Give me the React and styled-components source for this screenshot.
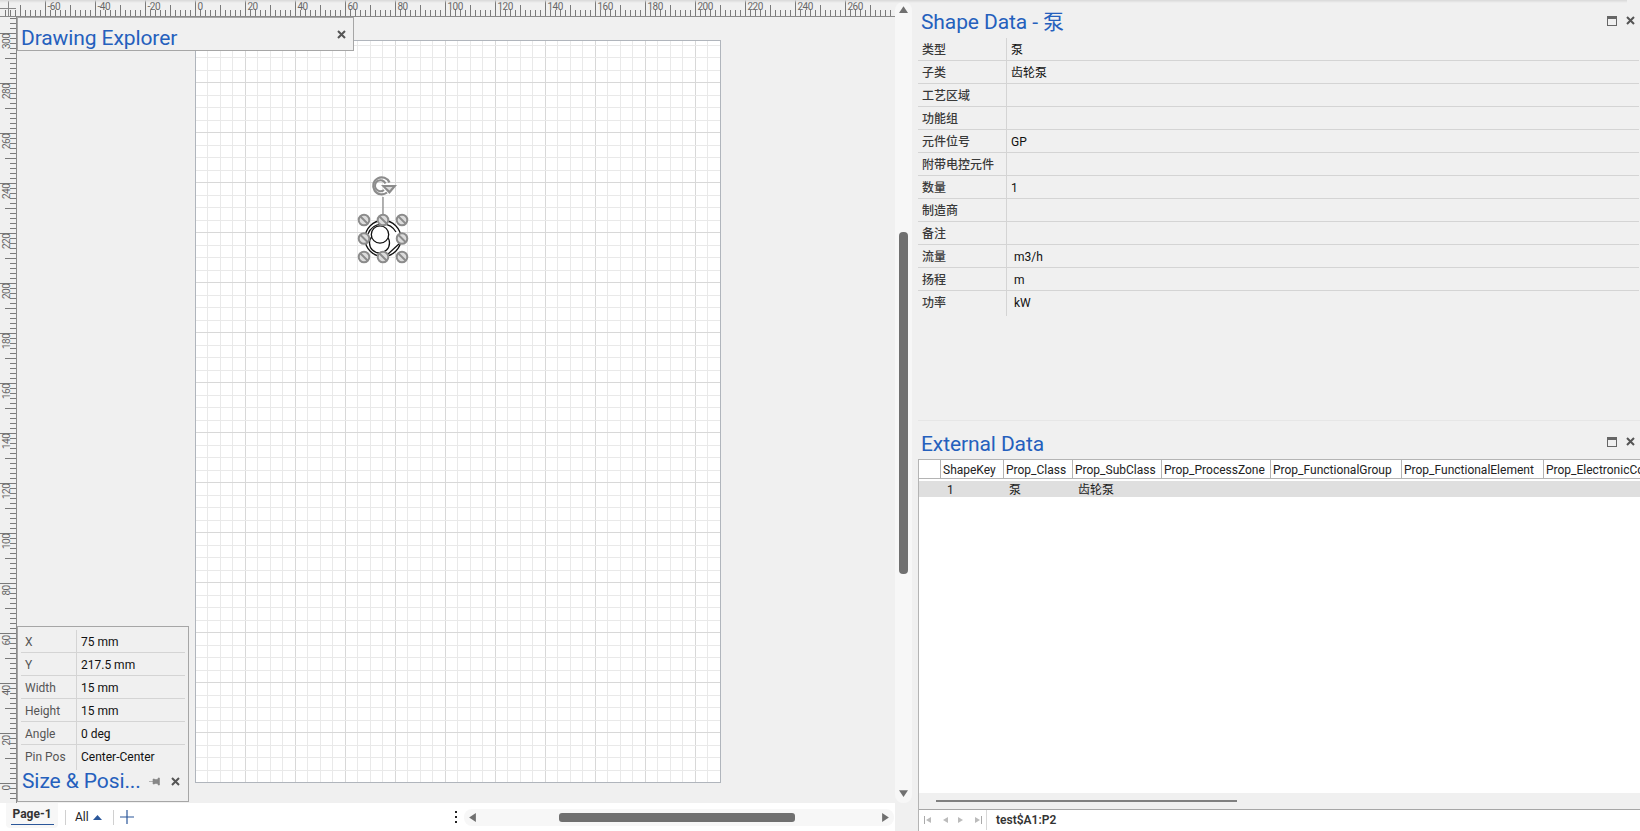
import React from 'react';
import styled, { createGlobalStyle } from 'styled-components';

const UI_FONT = 'Roboto, "Noto Sans CJK SC", sans-serif';

const GlobalStyle = createGlobalStyle`
  html, body {
    margin: 0;
    padding: 0;
    background: #f0f0f0;
    overflow: hidden;
  }
  body {
    font-family: ${UI_FONT};
    font-size: 12px;
    color: #222;
  }
  * { box-sizing: border-box; }
`;

const Screen = styled.div`
  position: relative;
  display: flex;
  width: 1640px;
  height: 831px;
  overflow: hidden;
`;

const TopShadow = styled.div`
  position: absolute;
  left: 0;
  top: 0;
  width: 1627px;
  height: 3px;
  background: linear-gradient(#d8d8d8, rgba(240, 240, 240, 0));
`;

const DrawingColumn = styled.div`
  display: flex;
  flex-direction: column;
  width: 895px;
  flex: none;
`;

const TopRuler = styled.div`
  height: 17px;
  flex: none;
  background: #f0f0f0;
  svg { display: block; }
`;

const CanvasRow = styled.div`
  display: flex;
  height: 786px;
  flex: none;
`;

const SideRuler = styled.div`
  width: 17px;
  flex: none;
  svg { display: block; }
`;

const Canvas = styled.div`
  position: relative;
  flex: 1;
  padding: 23px 0 0 178px;
  background: #f0f0f0;
`;

const Page = styled.div`
  position: relative;
  width: 526px;
  height: 743px;
  background: #fff;
  border: 1px solid #b0b5bc;
  svg { display: block; }
`;

const SelectionLayer = styled.svg`
  position: absolute;
  left: 144px;
  top: 129px;
`;

const FloatPanel = styled.div`
  position: absolute;
  left: 0;
  top: ${(p) => p.$top}px;
  width: ${(p) => p.$width}px;
  height: ${(p) => p.$height}px;
  background: #f0f0f0;
  border: 1px solid #a6a6a6;
`;

const ExplorerHead = styled.div`
  display: flex;
  align-items: center;
  justify-content: space-between;
  height: 100%;
  padding: 0 7px 0 3px;
`;

const PanelTitle = styled.div`
  margin-top: ${(p) => p.$drop || 0}px;
  font-size: 21px;
  font-weight: 400;
  line-height: 26px;
  letter-spacing: -0.1px;
  color: #2560bd;
  white-space: nowrap;
`;

const SizeBody = styled.div`
  display: flex;
  flex-direction: column;
  height: 100%;
  padding: 3px 3px 0;
`;

const SizeRow = styled.div`
  display: grid;
  grid-template-columns: 56px 1fr;
  height: 23px;
  flex: none;
  border-bottom: 1px solid ${(p) => (p.$last ? 'transparent' : '#d4d4d4')};
`;

const SizeLabel = styled.div`
  padding-left: 4px;
  line-height: 25px;
  color: #555;
  border-right: 1px solid #d4d4d4;
`;

const SizeValue = styled.div`
  padding-left: 4px;
  line-height: 25px;
  color: #111;
`;

const SizeFoot = styled.div`
  display: flex;
  align-items: center;
  height: 26px;
  padding: 0 5px 0 1px;
`;

const FootIcons = styled.div`
  display: flex;
  align-items: center;
  gap: 11px;
  margin-left: auto;
`;

const BottomBar = styled.div`
  display: flex;
  align-items: center;
  height: 28px;
  flex: none;
  background: #fff;
  padding: 0 1px 0 6px;
`;

const PageTab = styled.div`
  position: relative;
  width: 52px;
  height: 25px;
  margin-top: -3px;
  background: #f7f7f7;
  border-radius: 0 0 4px 4px;
  text-align: center;
  font-weight: 700;
  line-height: 22px;
  color: #333;
  &::after {
    content: '';
    position: absolute;
    left: 5px;
    right: 4px;
    bottom: 3px;
    height: 1px;
    background: #2b579a;
  }
`;

const BarDivider = styled.div`
  width: 1px;
  height: 15px;
  background: #d0d0d0;
  margin: 0 ${(p) => p.$right || 0}px 0 ${(p) => p.$left || 0}px;
`;

const AllFilter = styled.div`
  display: flex;
  align-items: center;
  gap: 4px;
  color: #222;
`;

const BarDots = styled.div`
  display: flex;
  flex-direction: column;
  gap: 3px;
  margin: 0 7px 0 auto;
  i {
    display: block;
    width: 2px;
    height: 2px;
    background: #222;
  }
`;

const HTrack = styled.div`
  display: flex;
  align-items: center;
  width: 430px;
  height: 17px;
  padding: 0 4px;
  background: #f7f7f7;
  border-radius: 8px;
`;

const HThumb = styled.div`
  width: 235.5px;
  height: 9px;
  margin: 0 auto 0 82px;
  background: #707070;
  border-radius: 3px;
`;

const ScrollColumn = styled.div`
  width: 17px;
  flex: none;
`;

const VTrack = styled.div`
  display: flex;
  flex-direction: column;
  align-items: center;
  height: 801px;
  margin-top: 2px;
  padding: 3px 0 5px;
  background: #f7f7f7;
  border-radius: 8px;
`;

const VThumb = styled.div`
  width: 9px;
  height: 342px;
  margin: 218px 0 auto;
  background: #707070;
  border-radius: 4px;
`;

const RightColumn = styled.div`
  display: flex;
  flex-direction: column;
  flex: 1;
  min-width: 0;
  padding-left: 6px;
`;

const DockPanel = styled.div`
  display: flex;
  flex-direction: column;
  flex: none;
  height: ${(p) => p.$height}px;
  border-bottom: ${(p) => (p.$line ? '1px solid #e6e6e6' : 'none')};
`;

const DockHead = styled.div`
  display: flex;
  align-items: center;
  height: 38px;
  flex: none;
  padding: 3px 5px 0 3px;
`;

const DockIcons = styled.div`
  display: flex;
  align-items: center;
  gap: 9px;
  margin-left: auto;
`;

const DataRow = styled.div`
  display: grid;
  grid-template-columns: 89px 1fr;
  height: 23px;
  margin-right: 1px;
  border-bottom: 1px solid ${(p) => (p.$last ? 'transparent' : '#d4d4d4')};
`;

const DataLabel = styled.div`
  padding-left: 4px;
  line-height: 25px;
  font-weight: 500;
  color: #3a3a3a;
  border-right: 1px solid #d4d4d4;
`;

const DataValue = styled.div`
  padding-left: ${(p) => (p.$indent ? 7 : 4)}px;
  line-height: 25px;
  color: #111;
`;

const GridBox = styled.div`
  display: flex;
  flex-direction: column;
  flex: 1;
  min-height: 0;
  background: #fff;
  border-top: 1px solid #b4b4b4;
  border-left: 1px solid #b4b4b4;
`;

const GridHeader = styled.div`
  display: grid;
  grid-template-columns: 22px 63px 69px 89px 109px 131px 142px 1fr;
  height: 19px;
  flex: none;
  border-bottom: 1px solid #b4b4b4;
  overflow: hidden;
`;

const HeaderCell = styled.div`
  padding-left: 2px;
  line-height: 21px;
  white-space: nowrap;
  overflow: hidden;
  color: #222;
  border-right: 1px solid #b4b4b4;
  &:last-child { border-right: 0; }
`;

const GridRow = styled.div`
  display: grid;
  grid-template-columns: 22px 63px 69px 89px 109px 131px 142px 1fr;
  height: 16px;
  flex: none;
  margin-top: 2px;
  background: #dfdfdf;
`;

const RowCell = styled.div`
  padding-left: ${(p) => p.$pad}px;
  line-height: 18px;
  color: #222;
`;

const GridFill = styled.div`
  flex: 1;
`;

const GridScroll = styled.div`
  display: flex;
  align-items: center;
  height: 17px;
  flex: none;
  padding-left: 17px;
  background: #f0f0f0;
  border-bottom: 1px solid #a6a6a6;
`;

const GridScrollThumb = styled.div`
  width: 301px;
  height: 2px;
  background: #808080;
`;

const SheetBar = styled.div`
  display: flex;
  align-items: center;
  height: 20px;
  flex: none;
  margin-bottom: 1px;
  background: #fff;
`;

const SheetNav = styled.div`
  display: flex;
  align-items: center;
  justify-content: space-between;
  width: 68px;
  height: 100%;
  padding: 0 4px 0 5px;
  border-right: 1px solid #d8d8d8;
`;

const SheetName = styled.div`
  padding-left: 9px;
  font-weight: 600;
  color: #333;
`;

const range = (from, to, step) => {
  const out = [];
  for (let i = from; i <= to; i += step) out.push(i);
  return out;
};

const tickLength = (mm) => {
  if (mm % 20 === 0) return 16;
  if (mm % 10 === 0) return 11;
  return 6;
};

const hRulerX = (mm) => Math.floor(195 + mm * 2.5) + 0.5;
const vRulerY = (mm) => Math.floor(783 - 17 - mm * 2.5) + 0.5;

const RulerText = styled.text`
  font-family: ${UI_FONT};
  font-size: 10px;
  letter-spacing: -0.5px;
  fill: #666;
`;

const HorizontalRuler = () => (
  <TopRuler>
    <svg width="895" height="17">
      <path d="M0 8.5H16M8.5 1V16" stroke="#888" fill="none" />
      <path d="M0 16.5H895" stroke="#8a8a8a" />
      {range(-76, 280, 2).map((mm) => (
        <line
          key={mm}
          x1={hRulerX(mm)}
          x2={hRulerX(mm)}
          y1={16 - tickLength(mm)}
          y2={16}
          stroke="#7a7a7a"
        />
      ))}
      {range(-60, 260, 20).map((mm) => (
        <RulerText key={mm} x={hRulerX(mm) + 2} y={10}>{mm}</RulerText>
      ))}
    </svg>
  </TopRuler>
);

const VerticalRuler = () => (
  <SideRuler>
    <svg width="17" height="786">
      <path d="M16.5 0V786" stroke="#8a8a8a" />
      {range(-6, 306, 2).map((mm) => (
        <line
          key={mm}
          y1={vRulerY(mm)}
          y2={vRulerY(mm)}
          x1={16 - tickLength(mm)}
          x2={16}
          stroke="#7a7a7a"
        />
      ))}
      {range(0, 300, 20).map((mm) => (
        <RulerText
          key={mm}
          transform={`translate(9.5 ${vRulerY(mm) + (mm === 0 ? 7 : mm < 100 ? 12 : 15.5)}) rotate(-90)`}
        >
          {mm}
        </RulerText>
      ))}
    </svg>
  </SideRuler>
);

const PageGrid = () => (
  <svg width="524" height="741" shapeRendering="crispEdges">
    {range(1, 42, 1).map((i) => {
      const x = Math.floor(12.5 * i) - 0.5;
      return <line key={i} x1={x} x2={x} y1={0} y2={741} stroke={i % 4 === 0 ? '#d8d8d8' : '#e9e9e9'} />;
    })}
    {range(1, 59, 1).map((i) => {
      const y = 741.5 - Math.floor(12.5 * i);
      return <line key={i} y1={y} y2={y} x1={0} x2={524} stroke={i % 4 === 0 ? '#d8d8d8' : '#e9e9e9'} />;
    })}
  </svg>
);

const Handle = ({ x, y }) => (
  <g>
    <circle cx={x} cy={y} r="5.3" fill="#dcdcdc" stroke="#8c8c8c" strokeWidth="2" />
    <line x1={x - 3.5} y1={y - 3.5} x2={x + 3.5} y2={y + 3.5} stroke="#8c8c8c" strokeWidth="2" />
  </g>
);

const HANDLES = [
  [24, 50], [43, 50], [62, 50],
  [24, 68.5], [62, 68.5],
  [24, 87], [43, 87], [62, 87],
];

const SelectedPump = () => (
  <SelectionLayer width="70" height="95" viewBox="0 0 70 95">
    <line x1="43" y1="27" x2="43" y2="45" stroke="#8c8c8c" strokeWidth="1.3" />
    <circle cx="43" cy="68.5" r="18" fill="#fff" stroke="#111" strokeWidth="1.3" />
    <path d="M28 64A15.5 15.5 0 0 1 56 62" fill="none" stroke="#111" strokeWidth="1.2" />
    <path d="M47 85L60 73" fill="none" stroke="#111" strokeWidth="1.2" />
    <path d="M29 68A15 15 0 0 0 47 83" fill="none" stroke="#111" strokeWidth="1.2" />
    <circle cx="39.5" cy="73" r="10" fill="#fff" stroke="#111" strokeWidth="1.3" />
    <circle cx="40" cy="64.5" r="8.7" fill="#fff" stroke="#111" strokeWidth="1.3" />
    <path d="M49.5 12.5A8.5 8.5 0 1 0 47 22.5" fill="none" stroke="#8c8c8c" strokeWidth="2.2" />
    <path d="M45.5 13.5A5.5 5.5 0 1 0 44 20" fill="none" stroke="#8c8c8c" strokeWidth="2" />
    <polygon points="41,15 57,15 49.5,24" fill="#8c8c8c" />
    <polygon points="45.5,17 52.5,17 49.5,20.5" fill="#dcdcdc" />
    {HANDLES.map(([x, y]) => <Handle key={`${x}-${y}`} x={x} y={y} />)}
  </SelectionLayer>
);

const CloseIcon = ({ color = '#555' }) => (
  <svg width="9" height="9" viewBox="0 0 9 9">
    <path d="M1 1L8 8M8 1L1 8" stroke={color} strokeWidth="2" />
  </svg>
);

const PinIcon = () => (
  <svg width="11" height="9" viewBox="0 0 11 9">
    <path d="M0 4.5H4M4 2H5.5V7H4zM5.5 2.5H9V6.5H5.5zM9 1H10.5V8H9z" fill="#888" stroke="#888" strokeWidth="0.6" />
  </svg>
);

const DockWindowIcon = () => (
  <svg width="10" height="10" viewBox="0 0 10 10">
    <rect x="0.5" y="0.5" width="9" height="9" fill="none" stroke="#666" />
    <rect x="0" y="0" width="10" height="3" fill="#666" />
  </svg>
);

const ArrowGlyph = ({ dir, color = '#707070', size = 9 }) => {
  const shapes = {
    up: '0,7 4,1 8,7',
    down: '0,1 8,1 4,7',
    left: '7,0 7,8 1,4',
    right: '1,0 1,8 7,4',
  };
  return (
    <svg width={size} height={size} viewBox="0 0 8 8">
      <polygon points={shapes[dir]} fill={color} />
    </svg>
  );
};

const SheetArrow = ({ dir, edge }) => (
  <svg width="8" height="8" viewBox="0 0 8 8">
    {edge && <rect x={dir === 'left' ? 0 : 7} y="0" width="1" height="8" fill="#aaa" />}
    <polygon points={dir === 'left' ? '7,1 7,7 2,4' : '1,1 1,7 6,4'} fill="#bbb" />
  </svg>
);

const SIZE_ROWS = [
  ['X', '75 mm'],
  ['Y', '217.5 mm'],
  ['Width', '15 mm'],
  ['Height', '15 mm'],
  ['Angle', '0 deg'],
  ['Pin Pos', 'Center-Center'],
];

const SHAPE_ROWS = [
  ['类型', '泵'],
  ['子类', '齿轮泵'],
  ['工艺区域', ''],
  ['功能组', ''],
  ['元件位号', 'GP'],
  ['附带电控元件', ''],
  ['数量', '1'],
  ['制造商', ''],
  ['备注', ''],
  ['流量', 'm3/h', true],
  ['扬程', 'm', true],
  ['功率', 'kW', true],
];

const COLUMNS = [
  '',
  'ShapeKey',
  'Prop_Class',
  'Prop_SubClass',
  'Prop_ProcessZone',
  'Prop_FunctionalGroup',
  'Prop_FunctionalElement',
  'Prop_ElectronicComponent',
];

const App = () => (
  <Screen>
    <GlobalStyle />
    <DrawingColumn>
      <HorizontalRuler />
      <CanvasRow>
        <VerticalRuler />
        <Canvas>
          <Page>
            <PageGrid />
            <SelectedPump />
          </Page>
          <FloatPanel $top={0} $width={337} $height={34}>
            <ExplorerHead>
              <PanelTitle $drop={7}>Drawing Explorer</PanelTitle>
              <CloseIcon />
            </ExplorerHead>
          </FloatPanel>
          <FloatPanel $top={609} $width={172} $height={176}>
            <SizeBody>
              {SIZE_ROWS.map(([label, value], i) => (
                <SizeRow key={label} $last={i === SIZE_ROWS.length - 1}>
                  <SizeLabel>{label}</SizeLabel>
                  <SizeValue>{value}</SizeValue>
                </SizeRow>
              ))}
              <SizeFoot>
                <PanelTitle>Size &amp; Posi...</PanelTitle>
                <FootIcons>
                  <PinIcon />
                  <CloseIcon />
                </FootIcons>
              </SizeFoot>
            </SizeBody>
          </FloatPanel>
        </Canvas>
      </CanvasRow>
      <BottomBar>
        <PageTab>Page-1</PageTab>
        <BarDivider $left={7} $right={9} />
        <AllFilter>
          All
          <svg width="9" height="5" viewBox="0 0 9 5"><polygon points="0,5 4.5,0 9,5" fill="#2b579a" /></svg>
        </AllFilter>
        <BarDivider $left={11} $right={6} />
        <svg width="14" height="14" viewBox="0 0 14 14">
          <path d="M7 0V14M0 7H14" stroke="#2b579a" strokeWidth="1.2" />
        </svg>
        <BarDots><i /><i /><i /></BarDots>
        <HTrack>
          <ArrowGlyph dir="left" />
          <HThumb />
          <ArrowGlyph dir="right" />
        </HTrack>
      </BottomBar>
    </DrawingColumn>
    <ScrollColumn>
      <VTrack>
        <ArrowGlyph dir="up" />
        <VThumb />
        <ArrowGlyph dir="down" />
      </VTrack>
    </ScrollColumn>
    <RightColumn>
      <DockPanel $height={421} $line>
        <DockHead>
          <PanelTitle $drop={3}>Shape Data - 泵</PanelTitle>
          <DockIcons>
            <DockWindowIcon />
            <CloseIcon />
          </DockIcons>
        </DockHead>
        {SHAPE_ROWS.map(([label, value, indent], i) => (
          <DataRow key={label} $last={i === SHAPE_ROWS.length - 1}>
            <DataLabel>{label}</DataLabel>
            <DataValue $indent={indent}>{value}</DataValue>
          </DataRow>
        ))}
      </DockPanel>
      <DockPanel $height={410}>
        <DockHead>
          <PanelTitle $drop={5}>External Data</PanelTitle>
          <DockIcons>
            <DockWindowIcon />
            <CloseIcon />
          </DockIcons>
        </DockHead>
        <GridBox>
          <GridHeader>
            {COLUMNS.map((name) => <HeaderCell key={name}>{name}</HeaderCell>)}
          </GridHeader>
          <GridRow>
            <RowCell />
            <RowCell $pad={6}>1</RowCell>
            <RowCell $pad={5}>泵</RowCell>
            <RowCell $pad={5}>齿轮泵</RowCell>
          </GridRow>
          <GridFill />
          <GridScroll>
            <GridScrollThumb />
          </GridScroll>
          <SheetBar>
            <SheetNav>
              <SheetArrow dir="left" edge />
              <SheetArrow dir="left" />
              <SheetArrow dir="right" />
              <SheetArrow dir="right" edge />
            </SheetNav>
            <SheetName>test$A1:P2</SheetName>
          </SheetBar>
        </GridBox>
      </DockPanel>
    </RightColumn>
    <TopShadow />
  </Screen>
);

export default App;
